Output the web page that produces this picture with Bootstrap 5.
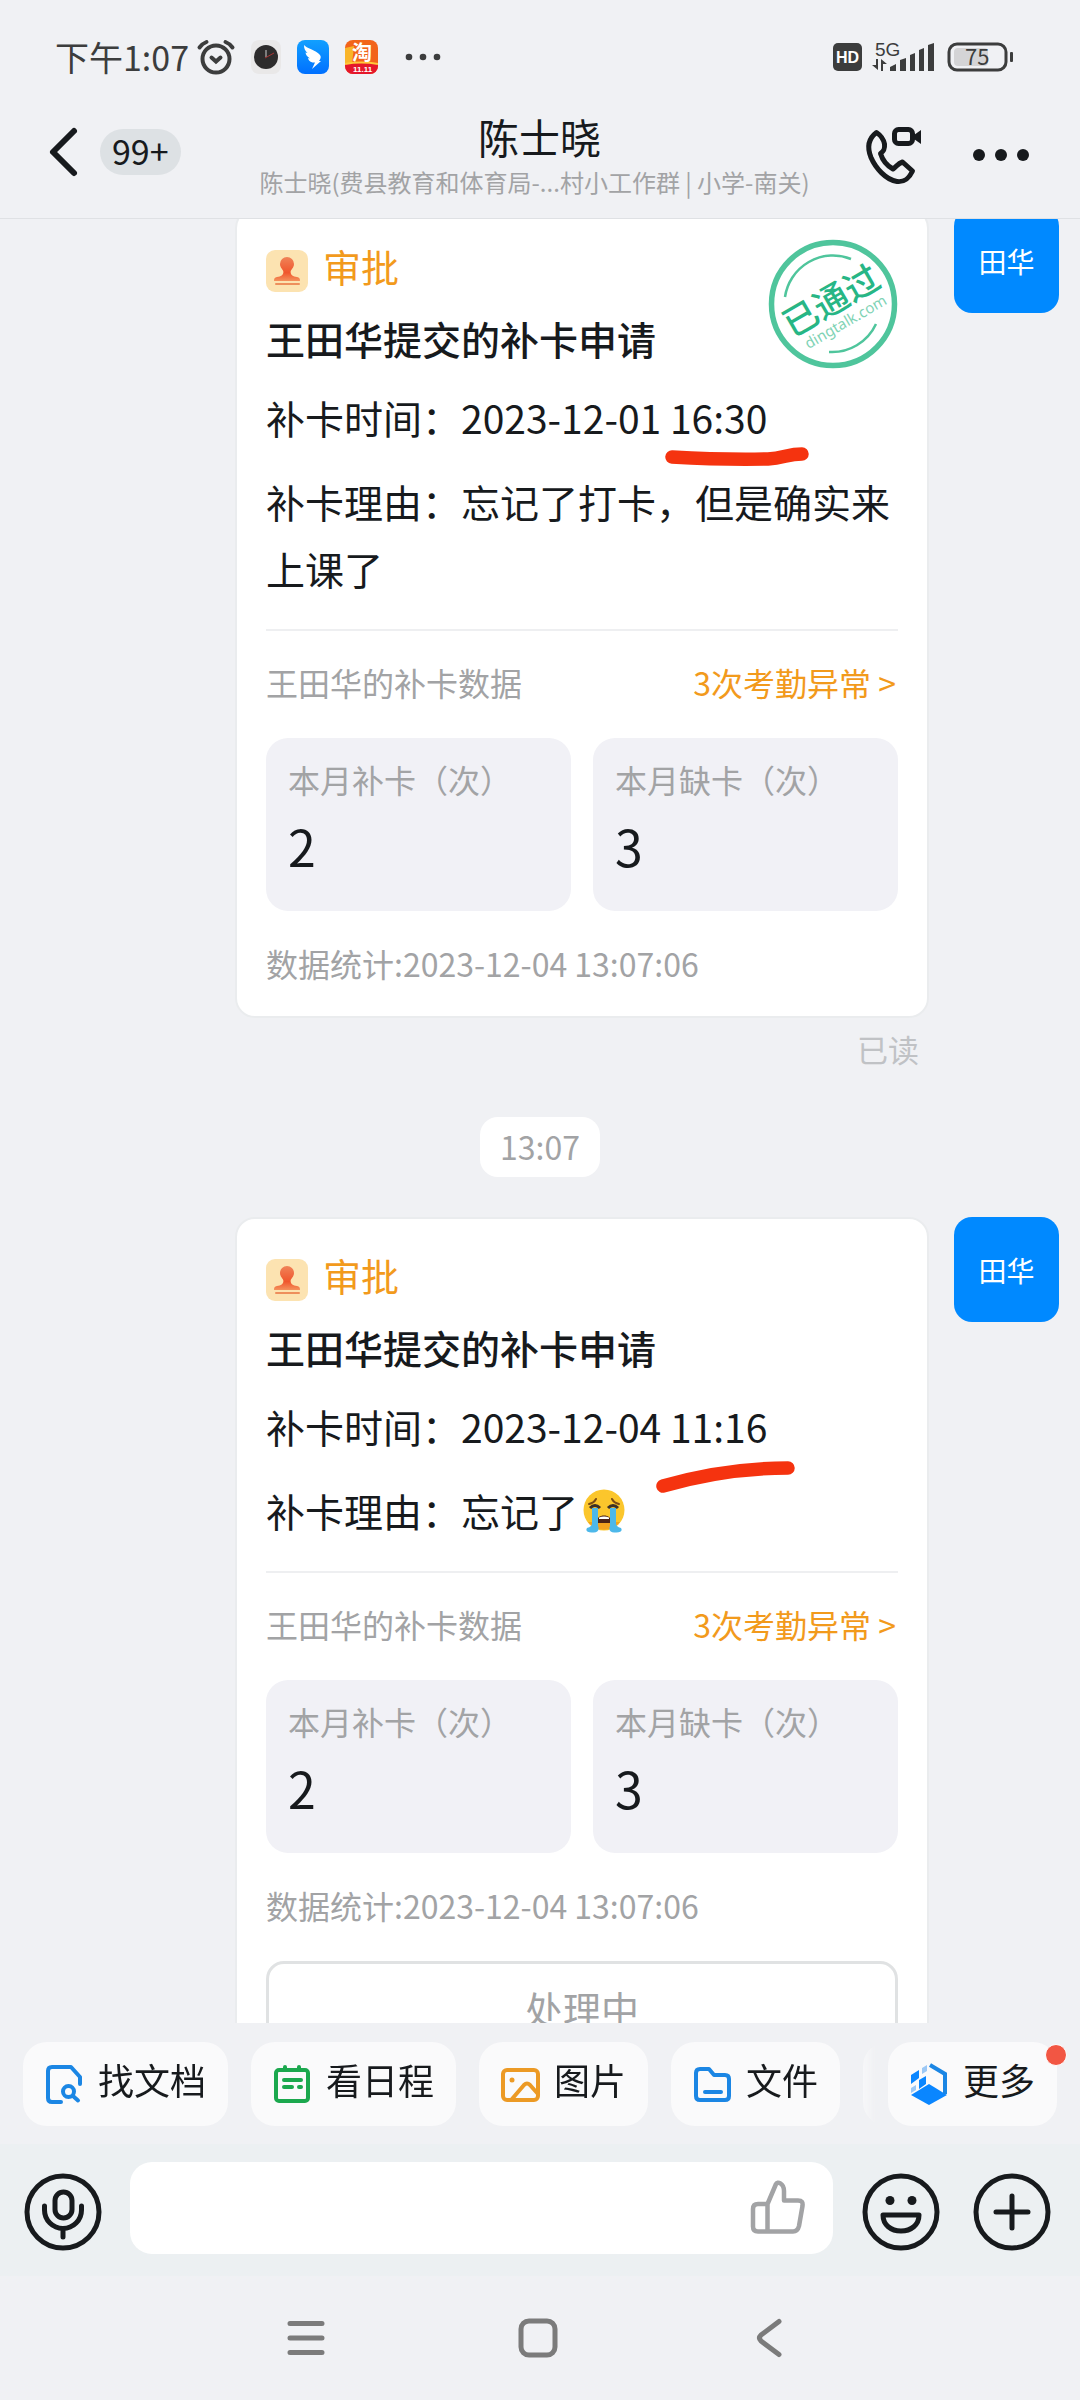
<!DOCTYPE html>
<html lang="zh-CN">
<head>
<meta charset="utf-8">
<meta name="viewport" content="width=device-width, initial-scale=1">
<title>陈士晓</title>
<link href="https://cdn.jsdelivr.net/npm/bootstrap@5.3.0/dist/css/bootstrap.min.css" rel="stylesheet">
<style>
:root{--ink:#171a1d;--mute:#a2a3a5;--page:#f0f1f4;--amber:#f29a1c;--azure:#0089ff}
body{font-family:"Noto Sans CJK SC","Noto Sans",sans-serif;background:var(--page);color:var(--ink)}
svg{display:block;flex:none;overflow:visible}
button{background:none;border:0;padding:0;color:inherit}
.screen{height:100vh}
.topbar{border-bottom:1px solid #dfe1e4}
.status{height:114px;padding:0 66px 0 55px;color:#3c3d3d;font-size:34px;line-height:40px}
.status-dots{margin-left:27px}
.latin{font-family:"Liberation Sans",sans-serif}
.chathead{height:104px;padding:0 50px 0 49px}
.side{width:180px}
.side-start{padding-top:13px;gap:21px}
.side-end{padding-top:11px;gap:49px}
.unread{font-size:34px;line-height:44px;height:46px;padding:0 12px;border-radius:23px;background:#dde1e4}
.who{font-size:41px;line-height:44px;font-weight:400}
.whosub{font-size:24px;line-height:48px;color:var(--mute);margin-right:10px}
.talk{min-height:0}
.msg{padding:0 21px 0 235px;gap:25px}
.msg-first{margin-top:-11px}
.bubble{border:2px solid #eaecee;border-radius:20px;padding:32px 29px 28px;font-size:39px;line-height:67px}
.avatar{width:105px;height:105px;border-radius:18px;background:var(--azure);color:#fff;font-size:28px}
.apprname{height:50px;line-height:48px;font-size:38px;color:var(--amber);gap:15px}
.subject{font-size:39px;line-height:67px;font-weight:500;margin:13px 0 12px}
.reason{margin-top:17px}
.rule{height:2px;background:#eeeff1;margin:27px 0 26px}
.meta{font-size:32px;line-height:50px;color:var(--mute)}
.meta a{color:var(--amber);text-decoration:none;margin-right:2px}
.stats{gap:22px;margin:31px 0 27px}
.tile{background:#f1f1f6;border-radius:22px;padding:20px 22px 36px;flex:1}
.tile dt{font-size:32px;line-height:42px;font-weight:400;color:var(--mute)}
.tile dd{font-size:50px;line-height:60px;margin:15px 0 0}
.pending{margin-top:31px;height:94px;border:3px solid #e0e2e3;border-radius:18px;font-size:38px;line-height:60px;color:var(--mute)}
.seal{top:29px;right:29px}
.stroke{left:427px;top:237px}
.stroke-b{left:418px;top:242px}
.seen{font-size:31px;line-height:40px;color:#c0c2c5;margin:11px 161px 0 0}
.clockpill{font-size:32px;line-height:58px;height:60px;padding:0 20px;border-radius:18px;background:#fff;color:var(--mute);margin:48px 0 40px}
.tools{height:121px;padding:0 23px;gap:12px}
.strip{gap:23px;min-width:0;-webkit-mask:linear-gradient(to left,transparent,#000 20px);mask:linear-gradient(to left,transparent,#000 20px)}
.chip{height:84px;padding:0 22px;gap:15px;border-radius:24px;background:#fafafb;font-size:36px;white-space:nowrap;flex:none}
.chip-label{line-height:46px;margin-bottom:10px}
.chip-cut{width:120px}
.dot{top:2px;right:-10px;width:22px;height:22px;border-radius:50%;background:#f25643;border:1px solid #fff}
.compose{height:132px;background:#ecf0f2;padding:3px 29px 0 24px}
.field{height:92px;border-radius:22px;background:#fff;margin:0 29px 8px 28px;padding:0 27px 4px 0}
.field input{font-size:38px;min-width:0}
.add{margin-left:33px}
.navkeys{height:124px;gap:192px;padding-right:5px;color:#7b7b7b}
</style>
</head>
<body>
<svg width="0" height="0" class="position-absolute" aria-hidden="true">
  <defs>
    <linearGradient id="gs" x1="0" y1="0" x2="0" y2="1"><stop offset="0" stop-color="#f08358"/><stop offset=".65" stop-color="#f0562d"/><stop offset="1" stop-color="#f4915c"/></linearGradient>
    <linearGradient id="gd" x1="0" y1="0" x2="0" y2="1"><stop offset="0" stop-color="#12a0ff"/><stop offset="1" stop-color="#0070ff"/></linearGradient>
    <symbol id="stamp" viewBox="0 0 42 42"><rect width="42" height="42" rx="9" fill="#fce3b1"/><path d="M21 7a7 7 0 0 1 7 7c0 4-3.400 5.500-3.400 8 0 3 2.400 4.500 6.400 5 2.400.3 3 1.400 3 4H8c0-2.600.6-3.700 3-4 4-.5 6.400-2 6.400-5 0-2.500-3.400-4-3.400-8a7 7 0 0 1 7-7z" fill="url(#gs)"/><rect x="9" y="33" width="25" height="2" rx="1" fill="#ee8f5c"/></symbol>
  </defs>
</svg>

<div class="screen d-flex flex-column overflow-hidden">
  <header class="topbar flex-shrink-0">
    <div class="status d-flex align-items-center">
      <span>下午1:07</span>
      <svg class="ms-2" width="38" height="36" viewBox="0 0 38 36" fill="none" stroke="#3c3d3d" stroke-width="4" stroke-linecap="round"><circle cx="19" cy="20" r="13.500"/><path d="M14.500 18.500l4.500 4 4.500-4M2.500 8.500q3-4 7-5.500M35.500 8.500q-3-4-7-5.500"/></svg>
      <svg class="ms-3" width="30" height="34" viewBox="0 0 30 34"><rect width="30" height="34" rx="8" fill="#e9e8e8"/><circle cx="15" cy="17" r="12" fill="#2d2c2c"/><path d="M15 10v7" stroke="#999" stroke-width="1.500"/><path d="M14 18l9-5" stroke="#a33" stroke-width="1"/></svg>
      <svg class="ms-3" width="32" height="34" viewBox="0 0 32 34"><rect width="32" height="34" rx="8" fill="url(#gd)"/><path d="M7 5c2 3 12 5 16 10 1.500 2 .5 4-1 6h2l-9 8 3-6.500h-2.500c-3-1-4-2.500-4.500-4.500l2 .5c-3-2-4-3.500-4.500-6l2 .5C8 10.500 7 8.500 7 5z" fill="#fff"/></svg>
      <svg class="ms-3" width="33" height="34" viewBox="0 0 33 34"><defs><clipPath id="tb"><rect width="33" height="34" rx="8"/></clipPath></defs><g clip-path="url(#tb)"><rect width="33" height="34" fill="#f2641a"/><path d="M0 8l9-2-2 18H0z" fill="#f9b52a"/><path d="M0 24q16-3 33 0v10H0z" fill="#e5172a"/><path d="M0 24q16-3 33 0" stroke="#ffc83a" stroke-width="2" fill="none"/></g><text x="7" y="20" font-size="20" font-weight="700" fill="#fff">淘</text><text class="latin" x="8" y="32" font-size="8" font-weight="700" fill="#fff">11.11</text></svg>
      <svg class="status-dots" width="34" height="10" viewBox="0 0 34 10" fill="#3c3d3d"><circle cx="4" cy="5" r="3.300"/><circle cx="18" cy="5" r="3.300"/><circle cx="32" cy="5" r="3.300"/></svg>
      <svg class="ms-auto" width="182" height="36" viewBox="0 0 182 36" fill="#3c3d3d">
        <rect x="1" y="4" width="29" height="28" rx="5"/><text class="latin" x="4" y="24" font-size="16" font-weight="700" fill="#fff">HD</text>
        <text class="latin" x="43" y="17" font-size="19">5G</text>
        <path d="M46 20v11l-6-5h4v-6zM49 32V20l6 5h-4v7zM58 32v-4l6-3v7zM68 32V21l6-2v13zM78 32V16l5-2v18zM87 32V11l5-2v23zM96 32V6l6-2v28z"/>
        <rect x="117" y="5" width="57" height="26" rx="8" fill="none" stroke="#3c3d3d" stroke-width="3"/><rect x="122" y="9" width="34" height="18" rx="4" fill="#d4d4d6"/><text x="133" y="26" font-size="22">75</text><rect x="178" y="13" width="3" height="10" rx="1"/>
      </svg>
    </div>
    <div class="chathead d-flex justify-content-between align-items-start">
      <div class="side side-start d-flex align-items-center">
        <button type="button" aria-label="返回"><svg width="30" height="50" viewBox="0 0 30 50" fill="none" stroke="currentColor" stroke-width="6" stroke-linecap="round" stroke-linejoin="round"><path d="M25 4L4 25l21 21"/></svg></button>
        <span class="unread">99+</span>
      </div>
      <div class="text-center text-nowrap">
        <h1 class="who m-0">陈士晓</h1>
        <div class="whosub">陈士晓(费县教育和体育局-...村小工作群 | 小学-南关)</div>
      </div>
      <div class="side side-end d-flex justify-content-end align-items-center">
        <button type="button" aria-label="通话"><svg width="60" height="60" viewBox="0 0 60 60" fill="none" stroke="currentColor" stroke-width="5" stroke-linejoin="round"><path d="M13.500 7.500c-8 6-9.500 15-5.500 25C12.500 43 23 55 34 56.500c7 .8 11.500-2 15.500-10.500L39.500 37c-5 1.500-6 5-9.500 7-5.500-3-10.500-9-12.500-15.500 3.500-2.500 4.500-4.500 4-9.500-1-5-3.500-8.500-8-11.500z"/><rect x="31.500" y="4.500" width="18" height="14" rx="4"/><path d="M51 10l7-5v14l-7-5z" fill="currentColor" stroke="none"/></svg></button>
        <button type="button" aria-label="更多选项"><svg width="58" height="14" viewBox="0 0 58 14" fill="currentColor"><circle cx="7" cy="7" r="6"/><circle cx="29" cy="7" r="6"/><circle cx="51" cy="7" r="6"/></svg></button>
      </div>
    </div>
  </header>

  <main class="talk flex-grow-1 overflow-hidden">
    <section class="msg msg-first d-flex align-items-start">
      <article class="bubble bg-white flex-grow-1 position-relative">
        <div class="apprname d-flex align-items-end"><svg width="42" height="42"><use href="#stamp"/></svg><span class="align-self-start">审批</span></div>
        <h2 class="subject">王田华提交的补卡申请</h2>
        <div>补卡时间：2023-12-01 16:30</div>
        <div class="reason">补卡理由：忘记了打卡，但是确实来上课了</div>
        <div class="rule"></div>
        <div class="meta d-flex justify-content-between"><span>王田华的补卡数据</span><a href="#">3次考勤异常 &gt;</a></div>
        <dl class="stats d-flex"><div class="tile"><dt>本月补卡（次）</dt><dd>2</dd></div><div class="tile"><dt>本月缺卡（次）</dt><dd>3</dd></div></dl>
        <div class="meta">数据统计:2023-12-04 13:07:06</div>
        <svg class="seal position-absolute" width="130" height="130" viewBox="-65 -65 130 130" fill="none" stroke="#4fc59c"><circle r="61.500" stroke-width="5.500"/><path d="M-48-7A48.500 48.500 0 0 1 18-45M-4 48A48.500 48.500 0 0 0 43 20" stroke-width="2.500"/><g transform="rotate(-30)" stroke="none" text-anchor="middle"><text x="0" y="9" font-size="35" font-weight="500" fill="#27b685">已通过</text><text x="2" y="27" font-size="15" fill="#7fd3b5" font-family="Noto Sans">dingtalk.com</text></g></svg>
        <svg class="stroke position-absolute" width="146" height="24" viewBox="0 0 146 24" fill="none" stroke="#f5330f" stroke-width="13.500" stroke-linecap="round"><path d="M8 10Q60 13 104 12C120 11 124 7 138 7"/></svg>
      </article>
      <div class="avatar d-flex align-items-center justify-content-center flex-shrink-0">田华</div>
    </section>
    <div class="seen text-end">已读</div>
    <div class="d-flex justify-content-center"><time class="clockpill">13:07</time></div>
    <section class="msg d-flex align-items-start">
      <article class="bubble bg-white flex-grow-1 position-relative">
        <div class="apprname d-flex align-items-end"><svg width="42" height="42"><use href="#stamp"/></svg><span class="align-self-start">审批</span></div>
        <h2 class="subject">王田华提交的补卡申请</h2>
        <div>补卡时间：2023-12-04 11:16</div>
        <div class="reason d-flex align-items-center">补卡理由：忘记了<svg class="ms-1" width="44" height="44" viewBox="0 0 44 44" role="img" aria-label="大哭"><circle cx="22" cy="21" r="20.500" fill="#fbc62c"/><path d="M6 33a20.500 20.500 0 0 0 32 0z" fill="#f2a31f"/><path d="M7 15q5-1 7-5M37 15q-5-1-7-5" stroke="#7a4a14" stroke-width="2" fill="none" stroke-linecap="round"/><path d="M8 19q5-5 10 0M26 19q5-5 10 0" stroke="#3c3028" stroke-width="3" fill="none"/><path d="M14 34c0-10 16-10 16 0z" fill="#4a2316"/><path d="M17 28.500q5-2 10 0v1.500H17z" fill="#fff"/><path d="M10 19h6v18c2 4-1 7-5 6.500-5 .5-8-1.500-6-4.500 2-1 5-1 5-5zM34 19h-6v18c-2 4 1 7 5 6.500 5 .5 8-1.500 6-4.500-2-1-5-1-5-5z" fill="#4db8ea"/></svg></div>
        <div class="rule"></div>
        <div class="meta d-flex justify-content-between"><span>王田华的补卡数据</span><a href="#">3次考勤异常 &gt;</a></div>
        <dl class="stats d-flex"><div class="tile"><dt>本月补卡（次）</dt><dd>2</dd></div><div class="tile"><dt>本月缺卡（次）</dt><dd>3</dd></div></dl>
        <div class="meta">数据统计:2023-12-04 13:07:06</div>
        <button type="button" class="pending w-100 d-block">处理中</button>
        <svg class="stroke-b position-absolute" width="144" height="36" viewBox="0 0 144 36" fill="none" stroke="#f5330f" stroke-width="13.500" stroke-linecap="round"><path d="M8 25Q70 7 133 7"/></svg>
      </article>
      <div class="avatar d-flex align-items-center justify-content-center flex-shrink-0">田华</div>
    </section>
  </main>

  <div class="tools d-flex align-items-center flex-shrink-0">
    <div class="strip d-flex flex-grow-1 overflow-hidden">
      <button type="button" class="chip d-flex align-items-center"><svg width="38" height="40" viewBox="0 0 38 40" fill="none" stroke="#1b86e4" stroke-width="4" stroke-linecap="round" stroke-linejoin="round"><path d="M16 38H7q-4 0-4-4V7q0-4 4-4h19l9 10v7"/><circle cx="23.500" cy="27.500" r="5.500"/><path d="M28 32l5 4.500"/></svg><span class="chip-label">找文档</span></button>
      <button type="button" class="chip d-flex align-items-center"><svg width="38" height="40" viewBox="0 0 38 40" fill="none" stroke="#1ba84e" stroke-width="4" stroke-linecap="round" stroke-linejoin="round"><rect x="3" y="6" width="32" height="31" rx="3"/><path d="M12 3v3M26 3v3M11 16h17M11 23h8M26 23h2"/></svg><span class="chip-label">看日程</span></button>
      <button type="button" class="chip d-flex align-items-center"><svg width="38" height="40" viewBox="0 0 38 40" fill="none" stroke="#ec9a25" stroke-width="4" stroke-linecap="round" stroke-linejoin="round"><rect x="2" y="6" width="35" height="30" rx="4"/><path d="M11 35l12-14q3-3 6 0l8 9"/><circle cx="11" cy="16" r="2.500" fill="#ec9a25" stroke="none"/></svg><span class="chip-label">图片</span></button>
      <button type="button" class="chip d-flex align-items-center"><svg width="38" height="40" viewBox="0 0 38 40" fill="none" stroke="#1b86e4" stroke-width="4" stroke-linecap="round" stroke-linejoin="round"><path d="M7 5h9l5 6h11q4 0 4 4v17q0 4-4 4H7q-4 0-4-4V9q0-4 4-4zM12 28h16"/></svg><span class="chip-label">文件</span></button>
      <div class="chip chip-cut"></div>
    </div>
    <button type="button" class="chip d-flex align-items-center position-relative"><svg width="38" height="44" viewBox="0 0 38 44"><path d="M19 22l18 11-18 10L1 33z" fill="#0a86ff"/><path d="M20 3l15 9v20" fill="none" stroke="#1b86e4" stroke-width="4"/><path d="M1 13l8-5v8l-8 6zM9 18l7-4v8l-7 5z" fill="#0a86ff"/><path d="M12 6l5-3v6l-5 3zM1 26l5-3v5l-5 3z" fill="#9cc8f5"/></svg><span class="chip-label">更多</span><span class="dot position-absolute"></span></button>
  </div>

  <div class="compose d-flex align-items-center flex-shrink-0">
    <button type="button" aria-label="语音"><svg width="78" height="78" viewBox="0 0 78 78" fill="none" stroke="currentColor" stroke-width="5" stroke-linecap="round"><circle cx="39" cy="39" r="36"/><rect x="31" y="19" width="17" height="26" rx="8.500"/><path d="M20.500 33v4a18.500 18.500 0 0 0 37 0v-4M39 57v7"/></svg></button>
    <div class="field d-flex align-items-center flex-grow-1">
      <input type="text" class="form-control border-0 shadow-none bg-transparent h-100" aria-label="输入消息">
      <button type="button" aria-label="点赞"><svg width="56" height="56" viewBox="0 0 56 56" fill="none" stroke="#a2a3a5" stroke-width="4.500" stroke-linejoin="round"><path d="M17.500 26L26 6c1-3 8-1 8 7v9.500h14c4 0 5 2 4.500 5.500L49 48c-1 4-2.500 5.500-6 5.500H8q-5 0-5-5V31q0-5 5-5zM17.500 26v27"/></svg></button>
    </div>
    <button type="button" aria-label="表情"><svg width="78" height="78" viewBox="0 0 78 78" fill="none" stroke="currentColor" stroke-width="5" stroke-linejoin="round"><circle cx="39" cy="39" r="36"/><path d="M21 42h36c0 10-8 16-18 16s-18-6-18-16z"/><circle cx="28" cy="27.500" r="4.500" fill="currentColor" stroke="none"/><circle cx="50" cy="27.500" r="4.500" fill="currentColor" stroke="none"/></svg></button>
    <button type="button" class="add" aria-label="添加"><svg width="78" height="78" viewBox="0 0 78 78" fill="none" stroke="currentColor" stroke-width="5" stroke-linecap="round"><circle cx="39" cy="39" r="36"/><path d="M39 23v32M23 39h32"/></svg></button>
  </div>

  <nav class="navkeys d-flex justify-content-center align-items-center flex-shrink-0">
    <button type="button" aria-label="任务"><svg width="40" height="40" viewBox="0 0 40 40" stroke="currentColor" stroke-width="5" stroke-linecap="round"><path d="M4 5.500h32M4 20h32M4 34.500h32"/></svg></button>
    <button type="button" aria-label="主页"><svg width="40" height="40" viewBox="0 0 40 40" fill="none" stroke="currentColor" stroke-width="5"><rect x="3" y="3" width="34" height="34" rx="8"/></svg></button>
    <button type="button" aria-label="后退"><svg width="40" height="40" viewBox="0 0 40 40" fill="none" stroke="currentColor" stroke-width="5" stroke-linecap="round" stroke-linejoin="round"><path d="M29 3.500L11 17q-3 3 0 6l18 13.500"/></svg></button>
  </nav>
</div>
<script src="https://cdn.jsdelivr.net/npm/bootstrap@5.3.0/dist/js/bootstrap.bundle.min.js"></script>
</body>
</html>
